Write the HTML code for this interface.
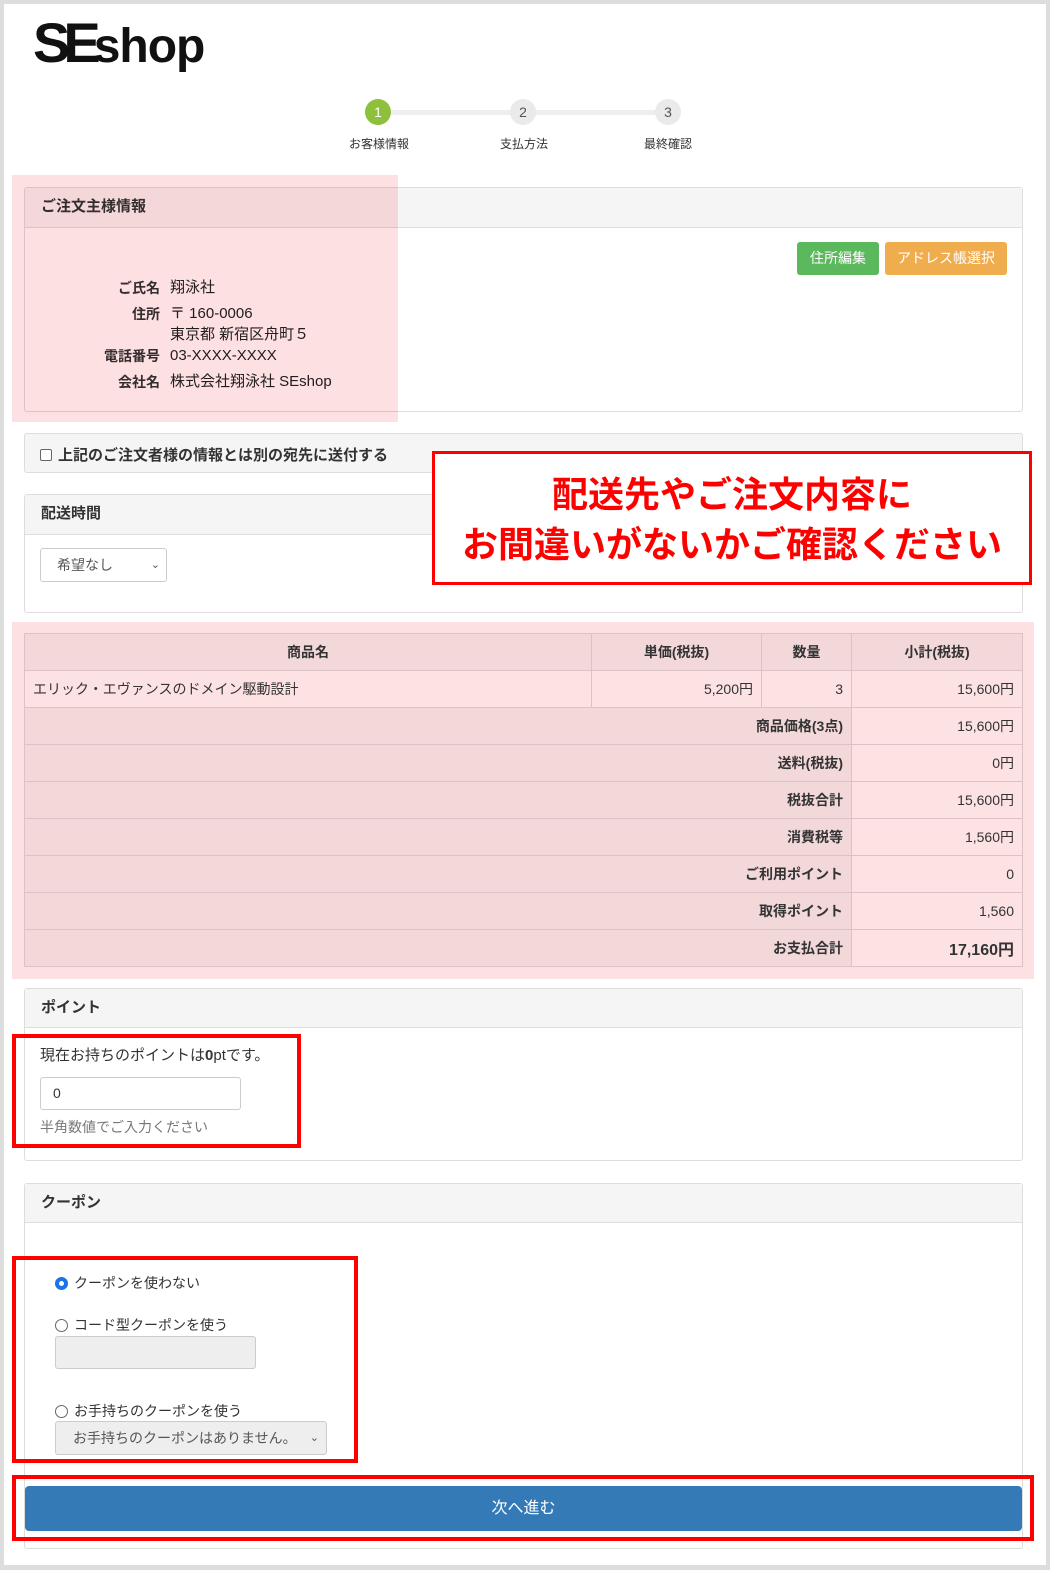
<!DOCTYPE html>
<html><head><meta charset="utf-8"><style>
*{box-sizing:border-box;margin:0;padding:0}
body{width:1050px;height:1570px;background:#ddd;font-family:"Liberation Sans","Noto Sans CJK JP",sans-serif;color:#333;position:relative;overflow:hidden}
.a{position:absolute}
.page{left:4px;top:4px;width:1042px;height:1561px;background:#fff}
.panel{border:1px solid #ddd;border-radius:3px;background:#fff}
.ph{background:#f5f5f5;border-bottom:1px solid #ddd;font-weight:bold;font-size:15px;padding-left:16px}
.pink{background:rgb(253,224,226);mix-blend-mode:multiply}
.red{border:4px solid #f00}
table{border-collapse:collapse;font-size:14px}
td,th{border:1px solid #dcc2c4;height:37px;padding:0 8px}
th{background:#f3d8da;font-weight:bold}
td{background:#fde2e4}
td.d{background:#f3d8da;text-align:right;font-weight:bold}
.r{text-align:right}
.step{width:26px;height:26px;border-radius:50%;background:#eaeaea;font-size:14px;text-align:center;line-height:26px;color:#555}
.sl{font-size:12px;color:#333}
</style></head><body>
<div class="a page"></div>
<div class="a" style="left:33px;top:8px;font-size:56px;font-weight:bold;letter-spacing:-7px;color:#111;line-height:70px">SE<span style="font-size:48px;letter-spacing:-1px">shop</span></div>

<div class="a" style="left:378px;top:110px;width:290px;height:5px;background:#eceef0"></div>
<div class="a step" style="left:365px;top:99px;background:#8fc03c;color:#fff">1</div>
<div class="a step" style="left:510px;top:99px">2</div>
<div class="a step" style="left:655px;top:99px">3</div>
<div class="a sl" style="left:349px;top:135px">お客様情報</div>
<div class="a sl" style="left:500px;top:135px">支払方法</div>
<div class="a sl" style="left:644px;top:135px">最終確認</div>

<div class="a panel" style="left:24px;top:187px;width:999px;height:225px">
 <div class="ph" style="height:40px;line-height:38px">ご注文主様情報</div>
</div>
<div class="a" style="left:797px;top:242px;width:82px;height:33px;background:#5cb85c;border-radius:3px;color:#fff;font-size:14px;text-align:center;line-height:33px">住所編集</div>
<div class="a" style="left:885px;top:242px;width:122px;height:33px;background:#f0ad4e;border-radius:3px;color:#fff;font-size:14px;text-align:center;line-height:33px">アドレス帳選択</div>
<div class="a" style="left:0;top:275px;width:160px;font-size:14px;font-weight:bold;text-align:right;line-height:26px">
<div>ご氏名</div><div style="height:42px">住所</div><div>電話番号</div><div>会社名</div></div>
<div class="a" style="left:170px;top:275px;font-size:15px;line-height:26px;color:#222">
<div>翔泳社</div><div style="line-height:21px;padding-top:2px;height:42px">〒 160-0006<br>東京都 新宿区舟町５</div><div>03-XXXX-XXXX</div><div>株式会社翔泳社 SEshop</div></div>
<div class="a pink" style="left:12px;top:175px;width:386px;height:247px"></div>

<div class="a panel" style="left:24px;top:433px;width:999px;height:40px;background:#f5f5f5"></div>
<div class="a" style="left:40px;top:444px;font-size:15px;font-weight:bold"><span style="display:inline-block;width:12px;height:12px;border:1px solid #666;border-radius:2px;vertical-align:-1px;margin-right:6px;background:#fff"></span>上記のご注文者様の情報とは別の宛先に送付する</div>

<div class="a panel" style="left:24px;top:494px;width:999px;height:119px">
 <div class="ph" style="height:40px;line-height:38px">配送時間</div>
</div>
<div class="a" style="left:40px;top:548px;width:127px;height:34px;border:1px solid #ccc;border-radius:3px;font-size:14px;line-height:32px;padding-left:16px;color:#555">希望なし<span style="position:absolute;right:6px;font-size:11px">⌄</span></div>

<div class="a red" style="left:432px;top:451px;width:600px;height:134px;background:#fff;border-width:3px;color:#f00;font-weight:bold;font-size:36px;text-align:center;line-height:50px;padding-top:16px">配送先やご注文内容に<br>お間違いがないかご確認ください</div>

<div class="a" style="left:12px;top:622px;width:1022px;height:357px;background:rgb(253,224,226)"></div>
<table class="a" style="left:24px;top:633px;width:999px">
<tr><th style="width:567px">商品名</th><th style="width:170px">単価(税抜)</th><th style="width:90px">数量</th><th>小計(税抜)</th></tr>
<tr><td>エリック・エヴァンスのドメイン駆動設計</td><td class="r">5,200円</td><td class="r">3</td><td class="r">15,600円</td></tr>
<tr><td class="d" colspan="3">商品価格(3点)</td><td class="r">15,600円</td></tr>
<tr><td class="d" colspan="3">送料(税抜)</td><td class="r">0円</td></tr>
<tr><td class="d" colspan="3">税抜合計</td><td class="r">15,600円</td></tr>
<tr><td class="d" colspan="3">消費税等</td><td class="r">1,560円</td></tr>
<tr><td class="d" colspan="3">ご利用ポイント</td><td class="r">0</td></tr>
<tr><td class="d" colspan="3">取得ポイント</td><td class="r">1,560</td></tr>
<tr><td class="d" colspan="3">お支払合計</td><td class="r" style="font-weight:bold;font-size:16px">17,160円</td></tr>
</table>

<div class="a panel" style="left:24px;top:988px;width:999px;height:173px">
 <div class="ph" style="height:39px;line-height:37px">ポイント</div>
</div>
<div class="a" style="left:40px;top:1044px;font-size:15px">現在お持ちのポイントは<b>0</b>ptです。</div>
<div class="a" style="left:40px;top:1077px;width:201px;height:33px;border:1px solid #ccc;border-radius:3px;font-size:14px;line-height:31px;padding-left:12px">0</div>
<div class="a" style="left:40px;top:1117px;font-size:14px;color:#777">半角数値でご入力ください</div>
<div class="a red" style="left:12px;top:1034px;width:289px;height:114px"></div>

<div class="a panel" style="left:24px;top:1183px;width:999px;height:366px">
 <div class="ph" style="height:39px;line-height:37px">クーポン</div>
</div>
<div class="a" style="left:55px;top:1274px;font-size:14px;line-height:18px">
<div><span style="display:inline-block;width:13px;height:13px;border-radius:50%;border:4px solid #1a73e8;vertical-align:-2px;margin-right:6px"></span>クーポンを使わない</div>
</div>
<div class="a" style="left:55px;top:1316px;font-size:14px;line-height:18px"><span style="display:inline-block;width:13px;height:13px;border-radius:50%;border:1px solid #666;vertical-align:-2px;margin-right:6px"></span>コード型クーポンを使う</div>
<div class="a" style="left:55px;top:1336px;width:201px;height:33px;border:1px solid #ccc;border-radius:3px;background:#eee"></div>
<div class="a" style="left:55px;top:1402px;font-size:14px;line-height:18px"><span style="display:inline-block;width:13px;height:13px;border-radius:50%;border:1px solid #666;vertical-align:-2px;margin-right:6px"></span>お手持ちのクーポンを使う</div>
<div class="a" style="left:55px;top:1421px;width:272px;height:34px;border:1px solid #ccc;border-radius:3px;background:#eee;font-size:14px;line-height:32px;padding-left:17px;color:#555">お手持ちのクーポンはありません。<span style="position:absolute;right:7px;font-size:11px">⌄</span></div>
<div class="a red" style="left:12px;top:1256px;width:346px;height:207px"></div>

<div class="a" style="left:25px;top:1486px;width:997px;height:45px;background:#337ab7;border-radius:4px;color:#fff;font-size:16px;text-align:center;line-height:45px">次へ進む</div>
<div class="a red" style="left:12px;top:1475px;width:1022px;height:66px"></div>
</body></html>
